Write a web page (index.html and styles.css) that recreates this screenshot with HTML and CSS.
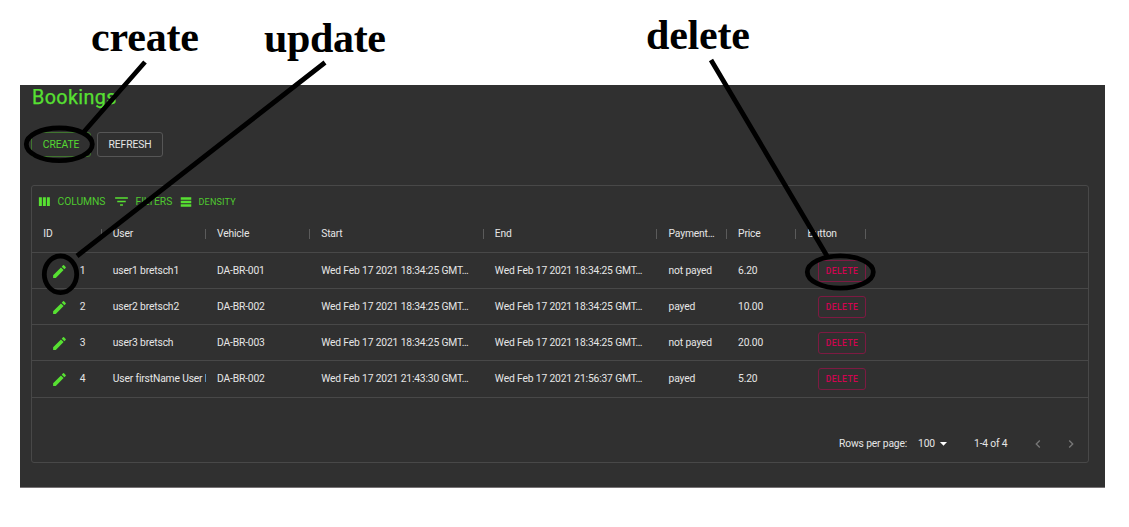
FILE: index.html
```html
<!DOCTYPE html>
<html lang="en">
<head>
<meta charset="utf-8">
<title>Bookings</title>
<link rel="stylesheet" href="styles.css">
</head>
<body>
<svg width="0" height="0" class="defs">
  <symbol id="pencil" viewBox="0 0 24 24"><path d="M3 17.25V21h3.75L17.81 9.94l-3.75-3.75L3 17.25zM20.71 7.04c.39-.39.39-1.02 0-1.41l-2.34-2.34a.996.996 0 0 0-1.41 0l-1.83 1.83 3.75 3.75 1.83-1.83z"/></symbol>
</svg>
<main class="panel">
  <h1 class="title">Bookings</h1>
  <div class="actions">
    <button class="btn btn-create">CREATE</button>
    <button class="btn btn-refresh">REFRESH</button>
  </div>
  <section class="grid">
    <div class="toolbar">
      <span class="tool tool-columns"><svg viewBox="0 0 24 24"><path d="M3 5h4.800v14H3zM9.400 5h4.800v14H9.400zM15.800 5h4.800v14h-4.800z"/></svg>COLUMNS</span>
      <span class="tool tool-filters"><svg viewBox="0 0 24 24"><path d="M10 18h4v-2h-4v2zM3 6v2h18V6H3zm3 7h12v-2H6v2z"/></svg>FILTERS</span>
      <span class="tool tool-density"><svg viewBox="0 0 24 24"><path d="M3 4h18v4.200H3zM3 10h18v4.200H3zM3 16h18v4.200H3z"/></svg>DENSITY</span>
    </div>
    <div class="row head">
      <span>ID</span><span>User</span><span>Vehicle</span><span>Start</span><span>End</span><span>Payment…</span><span>Price</span><span>Button</span>
    </div>
    <div class="row">
      <span class="id"><svg><use href="#pencil"/></svg>1</span><span>user1 bretsch1</span><span>DA-BR-001</span><span>Wed Feb 17 2021 18:34:25 GMT…</span><span>Wed Feb 17 2021 18:34:25 GMT…</span><span>not payed</span><span>6.20</span><span><button class="delete">DELETE</button></span>
    </div>
    <div class="row">
      <span class="id"><svg><use href="#pencil"/></svg>2</span><span>user2 bretsch2</span><span>DA-BR-002</span><span>Wed Feb 17 2021 18:34:25 GMT…</span><span>Wed Feb 17 2021 18:34:25 GMT…</span><span>payed</span><span>10.00</span><span><button class="delete">DELETE</button></span>
    </div>
    <div class="row">
      <span class="id"><svg><use href="#pencil"/></svg>3</span><span>user3 bretsch</span><span>DA-BR-003</span><span>Wed Feb 17 2021 18:34:25 GMT…</span><span>Wed Feb 17 2021 18:34:25 GMT…</span><span>not payed</span><span>20.00</span><span><button class="delete">DELETE</button></span>
    </div>
    <div class="row">
      <span class="id"><svg><use href="#pencil"/></svg>4</span><span>User firstName User l</span><span>DA-BR-002</span><span>Wed Feb 17 2021 21:43:30 GMT…</span><span>Wed Feb 17 2021 21:56:37 GMT…</span><span>payed</span><span>5.20</span><span><button class="delete">DELETE</button></span>
    </div>
    <footer class="footer">
      <span class="per-page">Rows per page:</span>
      <span class="size">100</span>
      <svg class="caret" viewBox="0 0 24 24"><path d="M7 10l5 5 5-5z"/></svg>
      <span class="range">1-4 of 4</span>
      <svg class="arrow" viewBox="0 0 24 24"><path d="M15.41 16.59L10.83 12l4.58-4.59L14 6l-6 6 6 6z"/></svg>
      <svg class="arrow" viewBox="0 0 24 24"><path d="M8.59 16.59L13.17 12 8.59 7.41 10 6l6 6-6 6z"/></svg>
    </footer>
  </section>
</main>
<svg class="notes" viewBox="0 0 1129 527">
  <g class="labels">
    <text x="91" y="51" textLength="108">create</text>
    <text x="264" y="52" textLength="122">update</text>
    <text x="646" y="48.500" textLength="104">delete</text>
  </g>
  <g class="marks">
    <path d="M145 62L82 134M325 62.500L77 256M711 60L827 256"/>
    <ellipse cx="59.300" cy="144.300" rx="33" ry="16.300"/>
    <ellipse cx="60.500" cy="274.300" rx="16.200" ry="18.300"/>
    <ellipse cx="840.300" cy="272" rx="33" ry="16.200"/>
  </g>
</svg>
</body>
</html>
```
FILE: styles.css
```css
* { box-sizing: border-box; }
body {
  margin: 0;
  padding: 85px 0 0 20px;
  height: 527px;
  overflow: hidden;
  background: #fff;
  font: 10.300px/14px Roboto, sans-serif;
  letter-spacing: -0.160px;
  color: #e6e6e6;
}
.defs { position: absolute; }
.panel {
  width: 1085px;
  height: 403px;
  padding: 0 16px 0 11px;
  background: #303030;
  border-bottom: 1px solid #777375;
}
.title {
  margin: 0 0 0 1px;
  height: 47px;
  font-size: 19.700px;
  font-weight: 400;
  line-height: 26px;
  letter-spacing: 0.400px;
  color: #57e032;
  -webkit-text-stroke: 0.250px #57e032;
}
.actions { display: flex; gap: 6px; height: 53px; }
.btn {
  height: 25px;
  padding: 0;
  background: none;
  border: 1px solid #565656;
  border-radius: 3px;
  font: inherit;
  line-height: 23px;
  letter-spacing: -0.100px;
  color: #e6e6e6;
}
.btn-create { width: 60px; color: #55d932; border-color: #40752f; }
.btn-refresh { width: 66px; }
.grid {
  height: 278px;
  border: 1px solid #484848;
  border-radius: 3px;
}
.toolbar {
  display: flex;
  align-items: center;
  height: 28px;
  padding: 3px 0 0 5px;
  color: #4fc92f;
}
.tool { display: flex; align-items: center; letter-spacing: -0.060px; }
.tool svg { width: 15px; height: 15px; fill: #57e032; }
.tool-columns { width: 76.500px; }
.tool-columns svg { margin-right: 5.500px; }
.tool-filters { width: 65.500px; }
.tool-filters svg { width: 17px; height: 17px; margin: 0 5.500px 0 -0.500px; }
.tool-density { font-size: 9px; letter-spacing: 0.200px; }
.tool-density svg { width: 14px; height: 14px; margin-right: 5.500px; }
.row {
  display: grid;
  grid-template-columns: 69.500px 104.200px 104.200px 173.700px 173.700px 69.500px 69.500px 69.500px;
  height: 36.130px;
  border-bottom: 1px solid #484848;
}
.row > span {
  display: flex;
  align-items: center;
  padding: 1px 0 0 11.300px;
  overflow: hidden;
  white-space: nowrap;
}
.row .id svg { width: 17px; height: 17px; margin: 0 11.500px 0 8px; fill: #57e032; }
.head { height: 39px; }
.head > span {
  background: linear-gradient(#5b5b5b, #5b5b5b) right 15px / 1px 10px no-repeat;
}
.row > span:last-child { overflow: visible; }
.delete {
  flex: none;
  width: 48px;
  height: 22px;
  margin-left: 10.500px;
  padding: 0;
  background: none;
  border: 1px solid #7d1a42;
  border-radius: 3px;
  font: 500 8.500px/20px Roboto, sans-serif;
  letter-spacing: 0.450px;
  color: #d00450;
}
.footer {
  display: flex;
  align-items: center;
  justify-content: flex-end;
  height: 36px;
  margin-top: 28px;
  padding-right: 9.500px;
}
.size { margin-left: 11px; }
.caret { width: 17px; height: 17px; margin: 0 22px 0 0; fill: #fff; }
.arrow { width: 16px; height: 16px; margin-left: 22px; fill: #777; }
.arrow + .arrow { margin-left: 17px; }
.notes { position: absolute; left: 0; top: 0; width: 1129px; height: 527px; }
.labels {
  font: bold 42px "Liberation Serif", serif;
  letter-spacing: 0;
  fill: #000;
}
.marks { fill: none; stroke: #000; stroke-width: 4.800px; }
```
